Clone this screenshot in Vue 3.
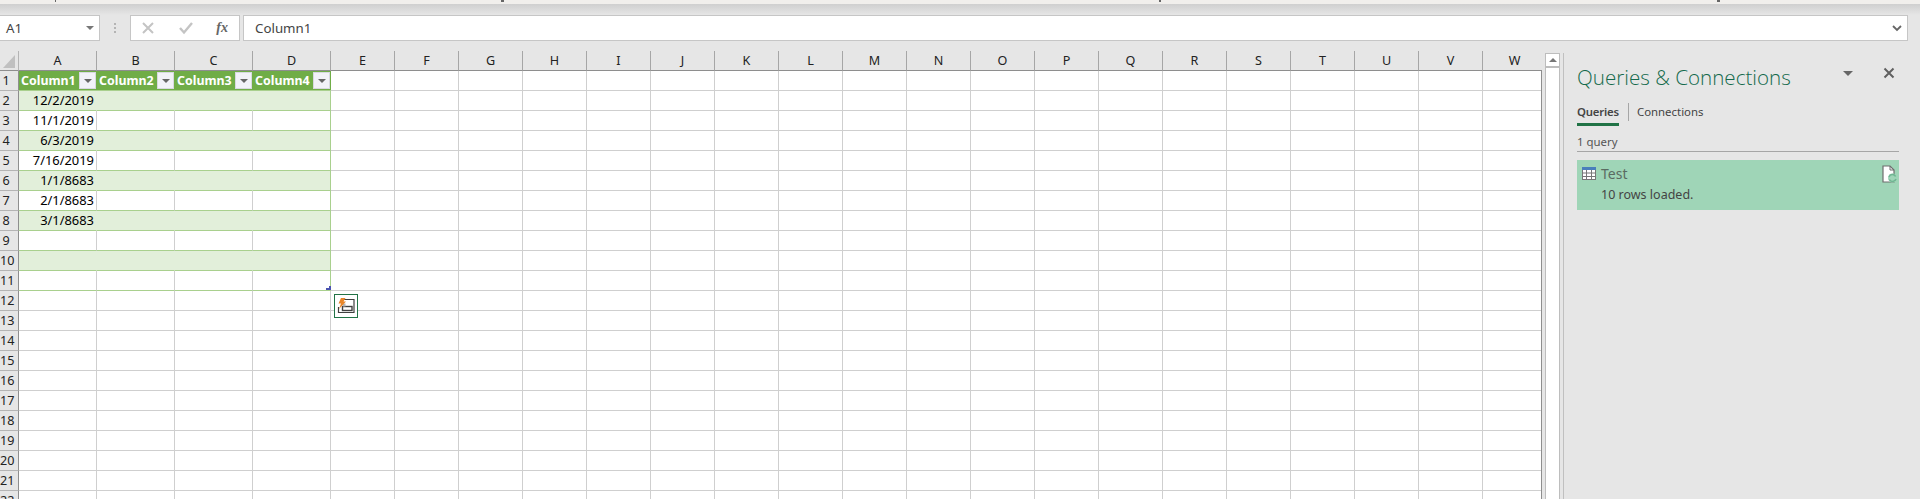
<template>
  <div class="app">
    <div class="ribbon-edge">
      <i
        v-for="m in ribbonMarks"
        :key="m.x"
        class="mark"
        :style="{ left: m.x + 'px', width: m.w + 'px' }"
      ></i>
    </div>

    <div class="formula-bar">
      <div class="name-box">
        <span>A1</span>
        <i class="tri"></i>
      </div>
      <div class="dots"><b></b><b></b><b></b></div>
      <div class="fx-buttons">
        <svg width="14" height="14" viewBox="0 0 14 14">
          <path d="M2 2 L12 12 M12 2 L2 12" stroke="#c4c4c4" stroke-width="2" fill="none" />
        </svg>
        <svg width="16" height="14" viewBox="0 0 16 14">
          <path d="M2 7 L6 11.5 L14 2" stroke="#c4c4c4" stroke-width="2.4" fill="none" />
        </svg>
        <em class="fx">fx</em>
      </div>
      <div class="formula-input">
        <span>Column1</span>
        <svg width="10" height="7" viewBox="0 0 10 7">
          <path d="M1 1 L5 5 L9 1" stroke="#666" stroke-width="1.8" fill="none" />
        </svg>
      </div>
    </div>

    <div class="main">
      <div class="sheet">
        <div class="grid">
          <div class="corner"><i></i></div>
          <div v-for="c in columns" :key="c" class="col-head">{{ c }}</div>

          <template v-for="r in rows" :key="r.n">
            <div class="row-head">{{ r.n }}</div>
            <div
              v-for="(c, i) in columns"
              :key="c"
              class="cell"
              :class="cellClass(r, i)"
            >
              <template v-if="r.n === 1 && i < 4">
                <span>Column{{ i + 1 }}</span>
                <button class="filter"><i></i></button>
              </template>
              <template v-else-if="i === 0">{{ r.date }}</template>
            </div>
          </template>
        </div>

        <div class="fill-handle"></div>
        <div class="quick-analysis">
          <svg width="22" height="22" viewBox="0 0 22 22">
            <path d="M8 4.5 H19 V17.5 H3.5 V12" stroke="#404040" stroke-width="1.2" fill="none" />
            <rect x="7.5" y="11.5" width="9.5" height="4" stroke="#404040" stroke-width="1.4" fill="none" />
            <rect x="8" y="8.5" width="2.5" height="3" fill="#b5b5b5" />
            <path d="M6 3 H10.5 L8.5 6.5 H11 L4 14 L6 8.5 H3.5 Z" fill="#e8862a" />
          </svg>
        </div>
      </div>

      <div class="scroll-col">
        <div class="scrollbar">
          <div class="scroll-up"><i></i></div>
        </div>
      </div>

      <aside class="pane">
        <div class="pane-title">
          <h1>Queries &amp; Connections</h1>
          <i class="pane-menu"></i>
          <svg width="12" height="12" viewBox="0 0 12 12">
            <path d="M1.5 1.5 L10.5 10.5 M10.5 1.5 L1.5 10.5" stroke="#606060" stroke-width="2" fill="none" />
          </svg>
        </div>
        <div class="tabs">
          <span class="tab active">Queries</span>
          <span class="tab-sep"></span>
          <span class="tab">Connections</span>
        </div>
        <div class="count">1 query</div>
        <div class="query">
          <svg class="table-icon" width="14" height="13" viewBox="0 0 14 13">
            <rect x="0.5" y="0.5" width="13" height="12" fill="#fff" stroke="#777" />
            <rect x="0" y="0" width="14" height="3" fill="#4a7ebb" />
            <path d="M0 6 H14 M0 9.5 H14 M4.5 3 V13 M9.5 3 V13" stroke="#777" fill="none" />
          </svg>
          <div class="query-text">
            <div class="query-name">Test</div>
            <div class="query-status">10 rows loaded.</div>
          </div>
          <svg class="doc-icon" width="15" height="18" viewBox="0 0 15 18">
            <path d="M1 1 H8 L12 5 V17 H1 Z" fill="#fff" stroke="#6e6e6e" stroke-width="1.2" />
            <path d="M8 1 V5 H12" fill="none" stroke="#6e6e6e" />
            <circle cx="10.5" cy="13" r="4.5" fill="#9fd5b7" />
            <path d="M7 12 A3.6 3.6 0 0 1 13.6 11.5 M14 14 A3.6 3.6 0 0 1 7.4 14.5" fill="none" stroke="#6fb592" stroke-width="1.6" />
          </svg>
        </div>
      </aside>
    </div>
  </div>
</template>

<script setup>
const columns = "ABCDEFGHIJKLMNOPQRSTUVW".split("");
const dates = {
  2: "12/2/2019",
  3: "11/1/2019",
  4: "6/3/2019",
  5: "7/16/2019",
  6: "1/1/8683",
  7: "2/1/8683",
  8: "3/1/8683",
};
const rows = Array.from({ length: 22 }, (_, i) => ({
  n: i + 1,
  date: dates[i + 1] || "",
}));
// ends of letters from the ribbon row, cut off by the screenshot
const ribbonMarks = [
  { x: 55, w: 1 },
  { x: 501, w: 3 },
  { x: 1159, w: 2 },
  { x: 1717, w: 3 },
];

function cellClass(r, i) {
  if (i > 3 || r.n > 11) return "";
  if (r.n === 1) return "table-head";
  return r.n % 2 === 0 ? "band" : "plain";
}
</script>

<style>
html,
body {
  margin: 0;
  background: #e6e6e6;
}
</style>

<style scoped>
.app {
  width: 1920px;
  height: 499px;
  overflow: hidden;
  background: #e6e6e6;
  font-family: "Noto Sans", "Open Sans", sans-serif;
  color: #000;
}
.ribbon-edge {
  position: relative;
  height: 15px;
  box-sizing: border-box;
  border-top: 4px solid #f1efec;
  background: linear-gradient(#cfcfcf, #e6e6e6);
}
.mark {
  position: absolute;
  top: -4px;
  height: 2px;
  background: #666;
}

/* formula bar */
.formula-bar {
  display: flex;
  height: 26px;
  margin-bottom: 10px;
  font-size: 13.3px;
  color: #444;
}
.name-box,
.fx-buttons,
.formula-input {
  display: flex;
  align-items: center;
  box-sizing: border-box;
  background: #fff;
  border: 1px solid #c6c6c6;
}
.name-box {
  width: 101px;
  margin-left: -1px;
  padding: 0 5px 0 6px;
  justify-content: space-between;
}
.tri {
  width: 0;
  height: 0;
  border-left: 4px solid transparent;
  border-right: 4px solid transparent;
  border-top: 4px solid #777;
}
.dots {
  width: 30px;
  display: flex;
  flex-direction: column;
  align-items: center;
  justify-content: center;
  gap: 2px;
}
.dots b {
  width: 2px;
  height: 2px;
  background: #b4b4b4;
}
.fx-buttons {
  width: 110px;
  padding: 0 6px 0 10px;
  justify-content: space-between;
  margin-right: 3px;
}
.fx {
  font-family: "Liberation Serif", serif;
  font-weight: bold;
  font-size: 14px;
  color: #666;
  margin-right: 5px;
}
.formula-input {
  width: 1665px;
  padding: 0 5px 0 11px;
  justify-content: space-between;
}

/* sheet */
.main {
  display: flex;
  height: 448px;
}
.sheet {
  position: relative;
  width: 1542px;
  flex: none;
  overflow: hidden;
}
.sheet::after {
  content: "";
  position: absolute;
  left: 1541px;
  top: 19px;
  bottom: 0;
  width: 1px;
  background: #8e8e8e;
}
.grid {
  display: grid;
  grid-template-columns: 19px repeat(4, 78px) repeat(19, 64px);
  grid-auto-rows: 20px;
  font-size: 12.6px;
  width: max-content;
}
.corner {
  position: relative;
  box-sizing: border-box;
  border-right: 1px solid #b4b4b4;
  border-bottom: 1px solid #8e8e8e;
}
.corner i {
  display: block;
  position: absolute;
  left: 3px;
  top: 4px;
  width: 0;
  height: 0;
  border-left: 12px solid transparent;
  border-bottom: 13px solid #c0c0c0;
}
.col-head {
  box-sizing: border-box;
  border-right: 1px solid #a6a6a6;
  border-bottom: 1px solid #8e8e8e;
  text-align: center;
  line-height: 20px;
  color: #222;
}
.row-head {
  box-sizing: border-box;
  border-right: 1px solid #8e8e8e;
  border-bottom: 1px solid #b4b4b4;
  line-height: 19px;
  padding-right: 6px;
  text-align: center;
  white-space: nowrap;
  color: #222;
}
.cell {
  box-sizing: border-box;
  background: #fff;
  border-right: 1px solid #cfcfcf;
  border-bottom: 1px solid #cfcfcf;
  font-size: 12.9px;
  line-height: 19px;
  text-align: right;
  padding-right: 2px;
  white-space: nowrap;
}
.cell.plain {
  border-bottom-color: #a9d08e;
}
.cell.band {
  background: #e2efda;
  border-right-color: #e2efda;
  border-bottom-color: #a9d08e;
}
.cell.plain:nth-child(24n + 5),
.cell.band:nth-child(24n + 5) {
  border-right-color: #a9d08e;
}
.cell.table-head {
  display: flex;
  align-items: center;
  justify-content: space-between;
  background: #70ad47;
  border-right: none;
  border-bottom-color: #a9d08e;
  color: #fff;
  font-weight: 700;
  font-size: 12.4px;
  padding: 0 1px 0 2px;
}
.filter {
  width: 17px;
  height: 17px;
  flex: none;
  padding: 0;
  box-sizing: border-box;
  display: flex;
  align-items: center;
  justify-content: center;
  background: #f2f2f8;
  border: 1px solid #d8d8e0;
}
.filter i {
  width: 0;
  height: 0;
  border-left: 4px solid transparent;
  border-right: 4px solid transparent;
  border-top: 4px solid #666;
}
.fill-handle {
  position: absolute;
  left: 326px;
  top: 235px;
  width: 5px;
  height: 4px;
  background: #4a52b0;
  clip-path: polygon(60% 0, 100% 0, 100% 100%, 0 100%, 0 50%, 60% 50%);
}
.quick-analysis {
  position: absolute;
  left: 334px;
  top: 243px;
  width: 24px;
  height: 24px;
  box-sizing: border-box;
  border: 1px solid #217346;
  background: #fff;
  display: flex;
  align-items: center;
  justify-content: center;
}

/* scrollbar */
.scroll-col {
  width: 21px;
  flex: none;
  padding: 2px 3px 0 3px;
  box-sizing: border-box;
}
.scrollbar {
  height: 100%;
  box-sizing: border-box;
  background: #fff;
  border-left: 1px solid #bdbdbd;
  border-right: 1px solid #bdbdbd;
}
.scroll-up {
  height: 15px;
  box-sizing: border-box;
  border-top: 1px solid #bdbdbd;
  border-bottom: 2px solid #bdbdbd;
  display: flex;
  align-items: center;
  justify-content: center;
}
.scroll-up i {
  width: 0;
  height: 0;
  border-left: 4px solid transparent;
  border-right: 4px solid transparent;
  border-bottom: 4px solid #777;
}

/* queries pane */
.pane {
  flex: 1;
  margin-top: 2px;
  border-left: 1px solid #c0c0c0;
  padding: 0 21px 0 13px;
  box-sizing: border-box;
}
.pane-title {
  display: flex;
  align-items: center;
  height: 40px;
}
.pane-title h1 {
  flex: 1;
  margin: 8px 0 0;
  font-family: "Open Sans", "Noto Sans", sans-serif;
  font-weight: 300;
  font-size: 20.6px;
  color: #146a4c;
  white-space: nowrap;
}
.pane-menu {
  width: 0;
  height: 0;
  margin-right: 30px;
  border-left: 5px solid transparent;
  border-right: 5px solid transparent;
  border-top: 5px solid #666;
}
.pane-title svg {
  margin-right: 4px;
}
.tabs {
  display: flex;
  align-items: center;
  height: 26px;
  margin-top: 6px;
  font-size: 11.4px;
  color: #444;
}
.tab {
  line-height: 20px;
}
.tab.active {
  position: relative;
  font-weight: 600;
  letter-spacing: -0.2px;
}
.tab.active::after {
  content: "";
  position: absolute;
  left: 0;
  right: 0;
  bottom: -4px;
  height: 3px;
  background: #217346;
}
.tab-sep {
  width: 1px;
  height: 18px;
  margin: 0 8px 0 9px;
  background: #a6a6a6;
}
.count {
  margin-top: 6px;
  height: 20px;
  line-height: 22px;
  font-size: 11.4px;
  color: #555;
  border-bottom: 1px solid #a6a6a6;
}
.query {
  display: flex;
  margin-top: 8px;
  height: 50px;
  background: #9fd5b7;
  position: relative;
}
.table-icon {
  flex: none;
  margin: 7px 5px 0 5px;
}
.query-text {
  flex: 1;
}
.query-name {
  margin-top: 4px;
  font-size: 14px;
  line-height: 20px;
  color: #5a6b62;
}
.query-status {
  margin-top: 1px;
  font-size: 12.5px;
  line-height: 20px;
  color: #444;
}
.doc-icon {
  flex: none;
  margin: 5px 2px 0 0;
}
</style>
